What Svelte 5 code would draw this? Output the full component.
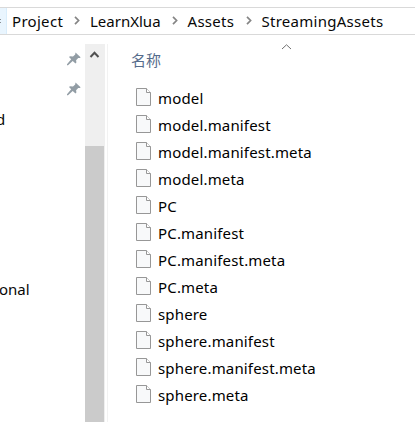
<script>
  const crumbs = [
    { name: 'Project', width: 78, spacing: 0.3 },
    { name: 'LearnXlua', width: 97.5, spacing: 0 },
    { name: 'Assets', width: 74, spacing: 0.3 },
    { name: 'StreamingAssets', width: 140, spacing: 0.27 }
  ];
  const files = [
    'model', 'model.manifest', 'model.manifest.meta', 'model.meta',
    'PC', 'PC.manifest', 'PC.manifest.meta', 'PC.meta',
    'sphere', 'sphere.manifest', 'sphere.manifest.meta', 'sphere.meta'
  ];
</script>

{#snippet pin()}
  <svg class="pin" width="14" height="14" viewBox="0 0 14 14">
    <path d="M8.5 0.5 13.3 5v1h-2.1L9.1 8.2l.3 2.4-.9 1-2.8-2.7L1 13.2H0v-.9l4.2-5L2 5.1l1-.9 3 .2L8.2 2.5z" fill="#929da5" />
  </svg>
{/snippet}

<div class="window">
  <header>
    <div class="previous"><svg width="2" height="7"><path d="M0 1h1v1H0zM0 4h1v1H0z" fill="#8a8f94" /></svg></div>
    <nav>
      {#each crumbs as crumb, i}
        <div class="crumb" style:width="{crumb.width}px">
          <span style:letter-spacing="{crumb.spacing}px">{crumb.name}</span>
          {#if i < crumbs.length - 1}
            <svg width="6" height="9" viewBox="0 0 6 9"><path d="M1 .8 4.6 4.5 1 8.2" fill="none" stroke="#858585" stroke-width="1.7" /></svg>
          {/if}
        </div>
      {/each}
    </nav>
  </header>
  <main>
    <aside>
      <div class="pins">{@render pin()}{@render pin()}</div>
      <span class="first">d</span>
      <span class="second">onal</span>
    </aside>
    <div class="scrollbar">
      <svg width="20" height="102" viewBox="0 0 20 102"><path d="M5.5 13 9.5 8.8 13.5 13" fill="none" stroke="#505050" stroke-width="2" /></svg>
      <div class="thumb"></div>
    </div>
    <section>
      <div class="heading">
        <span>名称</span>
        <svg width="11" height="6" viewBox="0 0 11 6"><path d="M1 5 5.5 .8 10 5" fill="none" stroke="#707070" /></svg>
      </div>
      <ul>
        {#each files as file}
          <li>
            <svg width="15" height="18" viewBox="0 0 15 18">
              <path d="M.5.5h10l4 4v13H.5z" fill="#f8f9fa" stroke="#979797" />
              <path d="M10.5.5v4h4" fill="#fff" stroke="#979797" />
            </svg>
            <span>{file}</span>
          </li>
        {/each}
      </ul>
    </section>
  </main>
</div>

<style>
  :global(body) { margin: 0; background: #fff; }
  .window { width: 415px; height: 422px; box-sizing: border-box; padding-top: 7px; overflow: hidden; background: #fff; color: #080808; font: 15px/27px "Noto Sans", "Noto Sans CJK SC", sans-serif; }
  header { height: 28px; box-sizing: border-box; border: solid #d9d9d9; border-width: 1px 0; display: flex; }
  .previous { width: 7px; box-sizing: border-box; background: #e9f5fe; border-right: 1px solid #d9edfb; display: flex; align-items: center; }
  nav { display: flex; padding-left: 5px; }
  .crumb { display: flex; align-items: center; justify-content: space-between; box-sizing: border-box; flex: none; height: 25px; line-height: 24px; }
  .crumb svg { margin-right: 10px; }
  .crumb span { white-space: nowrap; }
  main { display: flex; height: 387px; }
  aside { width: 85px; flex: none; display: flex; flex-direction: column; }
  .pins { height: 71px; padding: 17px 4px 0 0; box-sizing: border-box; display: flex; flex-direction: column; align-items: flex-end; gap: 16px; }
  aside span { height: 27px; }
  .second { margin-top: 143px; margin-left: -1px; }
  .first { margin-left: -4px; }
  .scrollbar { width: 20px; height: 378px; margin-top: 9px; background: #efefef; flex: none; }
  .scrollbar svg { display: block; }
  .thumb { width: 19px; height: 276px; background: #cbcbcb; }
  section { margin: 9px 0 0 2px; border-left: 1px solid #f2f2f2; flex: 1; }
  .heading { height: 40px; display: flex; color: #566c8c; padding-left: 23px; }
  .heading span { width: 150px; line-height: 33px; }
  .heading svg { display: block; }
  ul { list-style: none; margin: 0; padding: 0 0 0 28px; }
  li { height: 27px; display: flex; align-items: center; gap: 7px; color: #000; letter-spacing: .16px; }
  li svg { margin-bottom: 1px; flex: none; }
  li span { white-space: nowrap; padding-top: 2px; }
</style>
